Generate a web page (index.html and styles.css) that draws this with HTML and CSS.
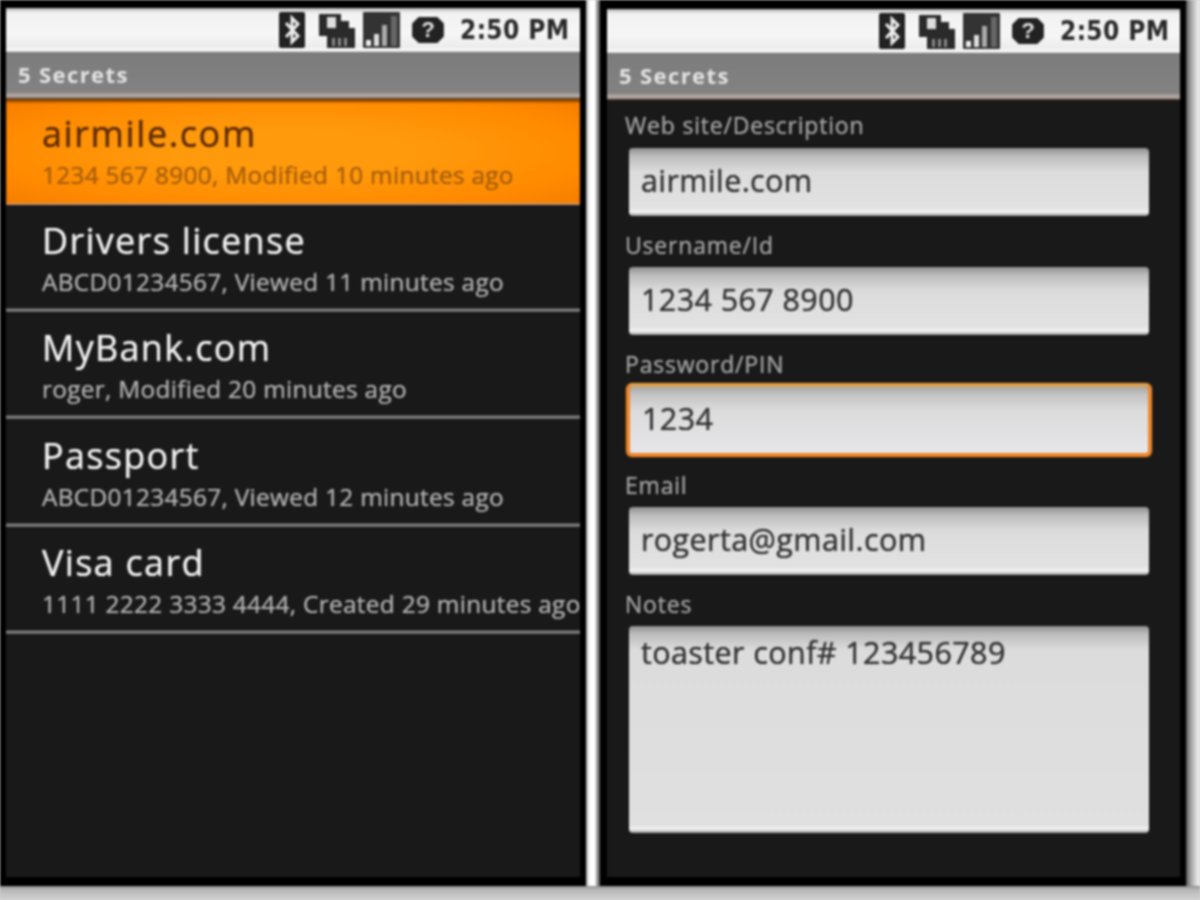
FILE: index.html
```html
<!DOCTYPE html>
<html lang="en">
<head>
<meta charset="utf-8">
<title>Secrets</title>
<link rel="stylesheet" href="styles.css">
</head>
<body>
<main class="stage">
  <section class="phone phone-left">
    <header class="status">
      <svg class="ic ic-bt" viewBox="0 0 26 36"><rect width="26" height="36" rx="2" fill="#222"/><path d="M7 11l12 13-6 6V6l6 6L7 25" fill="none" stroke="#eee" stroke-width="3"/></svg>
      <svg class="ic ic-net" viewBox="0 0 37 36"><path d="M1 2h22v7h8v7h6v20H9V24H1z" fill="#2a2a2a"/><rect x="9" y="5" width="9" height="11" fill="#ddd"/><path d="M14 26h3v8h-3zM20 26h3v8h-3zM26 26h3v8h-3z" fill="#888"/></svg>
      <svg class="ic ic-sig" viewBox="0 0 37 36"><rect width="37" height="36" rx="1" fill="#333"/><path d="M3 28h5v6H3z" fill="#eee"/><path d="M11 22h5v12h-5z" fill="#ddd"/><path d="M19 13h5v21h-5z" fill="#aaa"/><path d="M28 4h6v30h-6z" fill="#666"/></svg>
      <svg class="ic ic-help" viewBox="0 0 36 30"><path d="M8 1h20l7 7v14l-7 7H8l-7-7V8z" fill="#222"/><text x="18" y="23" class="help-mark">?</text></svg>
      <span class="clock">2:50 PM</span>
    </header>
    <h1 class="title">5 Secrets</h1>
    <ul class="list">
      <li class="row row-on"><span class="name">airmile.com</span><span class="meta">1234 567 8900, Modified 10 minutes ago</span></li>
      <li class="row"><span class="name">Drivers license</span><span class="meta">ABCD01234567, Viewed 11 minutes ago</span></li>
      <li class="row"><span class="name">MyBank.com</span><span class="meta">roger, Modified 20 minutes ago</span></li>
      <li class="row"><span class="name">Passport</span><span class="meta">ABCD01234567, Viewed 12 minutes ago</span></li>
      <li class="row"><span class="name">Visa card</span><span class="meta">1111 2222 3333 4444, Created 29 minutes ago</span></li>
    </ul>
  </section>
  <div class="divider"></div>
  <section class="phone phone-right">
    <header class="status">
      <svg class="ic ic-bt" viewBox="0 0 26 36"><rect width="26" height="36" rx="2" fill="#222"/><path d="M7 11l12 13-6 6V6l6 6L7 25" fill="none" stroke="#eee" stroke-width="3"/></svg>
      <svg class="ic ic-net" viewBox="0 0 37 36"><path d="M1 2h22v7h8v7h6v20H9V24H1z" fill="#2a2a2a"/><rect x="9" y="5" width="9" height="11" fill="#ddd"/><path d="M14 26h3v8h-3zM20 26h3v8h-3zM26 26h3v8h-3z" fill="#888"/></svg>
      <svg class="ic ic-sig" viewBox="0 0 37 36"><rect width="37" height="36" rx="1" fill="#333"/><path d="M3 28h5v6H3z" fill="#eee"/><path d="M11 22h5v12h-5z" fill="#ddd"/><path d="M19 13h5v21h-5z" fill="#aaa"/><path d="M28 4h6v30h-6z" fill="#666"/></svg>
      <svg class="ic ic-help" viewBox="0 0 36 30"><path d="M8 1h20l7 7v14l-7 7H8l-7-7V8z" fill="#222"/><text x="18" y="23" class="help-mark">?</text></svg>
      <span class="clock">2:50 PM</span>
    </header>
    <h1 class="title">5 Secrets</h1>
    <form class="form">
      <div class="label label-first">Web site/Description</div>
      <div class="field">airmile.com</div>
      <div class="label">Username/Id</div>
      <div class="field">1234 567 8900</div>
      <div class="label">Password/PIN</div>
      <div class="field field-focus">1234</div>
      <div class="label">Email</div>
      <div class="field">rogerta@gmail.com</div>
      <div class="label">Notes</div>
      <div class="field field-notes">toaster conf# 123456789</div>
    </form>
  </section>
  <div class="edge"></div>
</main>
</body>
</html>
```
FILE: styles.css
```css
* { box-sizing: border-box; }
html, body { margin: 0; padding: 0; }
body {
  width: 1200px;
  height: 900px;
  overflow: hidden;
  background: #d2d2d2;
  font-family: "Open Sans", "Noto Sans", sans-serif;
}
.stage {
  display: flex;
  width: 1200px;
  height: 900px;
  align-items: flex-start;
  background: linear-gradient(#8a8a8a 886px, #b4b4b4 889px, #d2d2d2 900px);
  filter: blur(0.9px);
}
.phone {
  height: 886px;
  background: #191919;
  border: solid #000;
  border-width: 8px 6px 9px 6px;
  display: flex;
  flex-direction: column;
  overflow: hidden;
}
.phone-left { width: 586px; }
.phone-right { width: 586px; border-width: 9px 6px 9px 7px; }
.divider {
  width: 14px;
  height: 886px;
  background: linear-gradient(90deg, #999 0, #ddd 2px, #fff 4px, #fff 9px, #999 11px, #555 14px);
}
.edge {
  width: 14px;
  height: 886px;
  background: linear-gradient(90deg, #555 0, #999 4px, #d8d8d8 10px, #f4f4f4 14px);
}
.status {
  height: 44px;
  flex: none;
  display: flex;
  align-items: center;
  background: linear-gradient(#b8b8b8 0, #f2f2f2 5px, #f6f6f6 26px, #ececec 40px, #fff 42px, #ccc 44px);
  padding-right: 12px;
}
.ic { display: block; flex: none; }
.ic-bt { width: 26px; height: 36px; margin-left: auto; }
.ic-net { width: 37px; height: 36px; margin-left: 13px; }
.ic-sig { width: 37px; height: 36px; margin-left: 8px; }
.ic-help { width: 36px; height: 28px; margin-left: 10px; }
.help-mark { font: 700 24px "Liberation Sans", sans-serif; fill: #ddd; text-anchor: middle; }
.clock {
  margin-left: 14px;
  font: 700 26px/1 "DejaVu Sans", sans-serif;
  color: #2a2a2a;
  letter-spacing: 0.4px;
  white-space: nowrap;
  transform: scaleX(0.9);
  transform-origin: left;
  width: 108px;
}
.title {
  height: 47px;
  flex: none;
  margin: 0;
  padding: 7px 0 0 12px;
  background: linear-gradient(#7c7c7c 0, #828282 40px, #b3a7a2 43px, #b3a7a2 45px, #3c2a1c 47px);
  color: #e2e2e2;
  font: 700 22px/30px "Open Sans", sans-serif;
  letter-spacing: 1.4px;
}
.list { list-style: none; margin: 0; padding: 0; }
.row {
  height: 107.4px;
  padding: 13px 0 0 36px;
  display: flex;
  flex-direction: column;
  white-space: nowrap;
  background: linear-gradient(#191919 103px, #777 104px, #888 106px, #191919 107.4px);
}
.name {
  font-size: 36px;
  font-weight: 500;
  line-height: 46px;
  color: #f0f0f0;
  letter-spacing: 1.3px;
  text-shadow: 0 0 1px currentColor;
}
.meta {
  font-size: 24.4px;
  font-weight: 500;
  line-height: 34px;
  margin-top: 1px;
  color: #adadad;
  letter-spacing: 0.3px;
  text-shadow: 0 0 1px currentColor;
}
.row-on {
  background: radial-gradient(ellipse at 50% 50%, #ff9a0c 30%, #ff8a00 75%, #f57c00 100%);
  box-shadow: inset 0 3px 2px #8a4500, inset 0 -2px 1px #c89668;
  height: 106px;
  padding-top: 12px;
}
.row-on .name { color: #5e2c00; letter-spacing: 1.6px; }
.row-on .meta { color: #a85f0c; }
.form {
  display: flex;
  flex-direction: column;
  padding: 0 31px 0 22px;
}
.label {
  height: 51px;
  margin-left: -4px;
  padding-top: 15px;
  font-size: 23px;
  font-weight: 500;
  line-height: 28px;
  color: #a0a0a0;
  letter-spacing: 0.8px;
  white-space: nowrap;
  text-shadow: 0 0 1px currentColor;
}
.label-first { height: 48px; padding-top: 11px; }
.field {
  height: 68px;
  flex: none;
  padding: 0 12px 5px;
  display: flex;
  align-items: center;
  font-size: 30.5px;
  font-weight: 500;
  color: #333;
  letter-spacing: 0.4px;
  white-space: nowrap;
  border-radius: 4px;
  text-shadow: 0 0 1px currentColor;
  background: linear-gradient(#8f8f8f 0, #bcbcbc 8px, #dcdcdc 24px, #e2e2e2 60px, #f4f4f4 64px, #999 68px);
}
.field-focus {
  margin: -3px -3px -1px -3px;
  height: 74px;
  padding-left: 12px;
  border: 4px solid #f0862a;
  border-top-color: #dda050;
  border-radius: 6px;
  background: linear-gradient(#a8a8a8 0, #c4c4c4 8px, #dcdcdc 24px, #e6e6ea 100%);
  box-shadow: 0 0 2px #7a3a00;
}
.field-notes {
  height: 207px;
  align-items: flex-start;
  padding-top: 5px;
  background: linear-gradient(#8f8f8f 0, #bcbcbc 8px, #dcdcdc 24px, #e0e0e0 199px, #f4f4f4 203px, #999 207px);
}
```
